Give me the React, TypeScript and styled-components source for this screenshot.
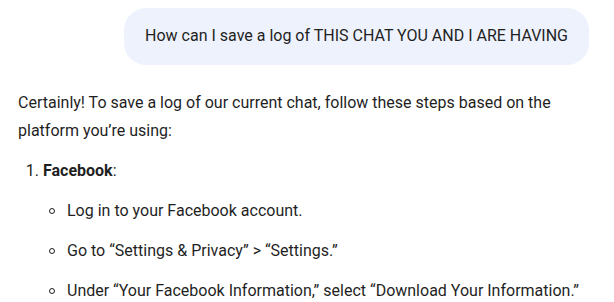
import React from "react";
import styled, { createGlobalStyle } from "styled-components";

const Global = createGlobalStyle`
  html, body { margin: 0; padding: 0; background: #ffffff; }
  body { font-family: Roboto, "Noto Sans", Arial, sans-serif; color: #1f1f1f; }
`;

const Page = styled.div`
  display: flex;
  flex-direction: column;
  padding: 8px 25px 0 18px;
`;

const UserRow = styled.div`
  display: flex;
  justify-content: flex-end;
`;

const Bubble = styled.div`
  background: #eef2fd;
  border-radius: 22px;
  padding: 14px 21px 15px 21px;
  font-size: 16px;
  line-height: 28px;
  color: #1f1f1f;
`;

const Answer = styled.div`
  margin-top: 24px;
  font-size: 16px;
  line-height: 28px;
  color: #1f1f1f;
`;

const Para = styled.p`
  margin: 0;
`;

const OList = styled.ol`
  margin: 12px 0 0 0;
  padding-left: 25px;
`;

const Item = styled.li`
  padding-left: 0;
`;

const Strong = styled.strong`
  font-weight: 700;
`;

const SubList = styled.ul`
  list-style: none;
  margin: 0;
  padding: 0 0 0 0;
`;

const SubItem = styled.li`
  position: relative;
  margin-top: 12px;
  padding-left: 24px;
  &::before {
    content: "";
    position: absolute;
    left: 6px;
    top: 11px;
    width: 4px;
    height: 4px;
    border: 1.2px solid #1f1f1f;
    border-radius: 50%;
  }
`;

export default function App() {
  return (
    <>
      <Global />
      <Page>
        <UserRow>
          <Bubble>How can I save a log of THIS CHAT YOU AND I ARE HAVING</Bubble>
        </UserRow>
        <Answer>
          <Para>
            Certainly! To save a log of our current chat, follow these steps based on the
            platform you’re using:
          </Para>
          <OList>
            <Item>
              <Strong>Facebook</Strong>:
              <SubList>
                <SubItem>Log in to your Facebook account.</SubItem>
                <SubItem>Go to “Settings &amp; Privacy” &gt; “Settings.”</SubItem>
                <SubItem>Under “Your Facebook Information,” select “Download Your Information.”</SubItem>
              </SubList>
            </Item>
          </OList>
        </Answer>
      </Page>
    </>
  );
}
